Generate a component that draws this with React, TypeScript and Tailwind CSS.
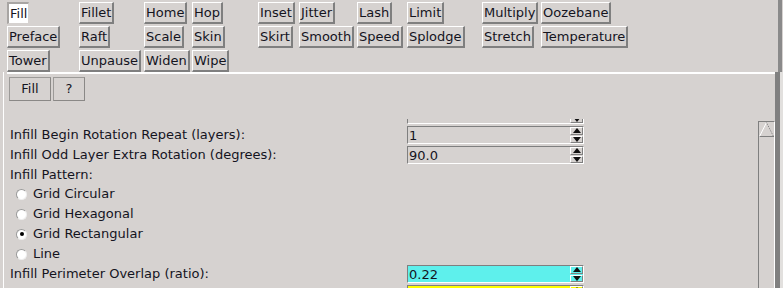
import React from 'react';

const rows: string[][] = [
  ['Fill', 'Fillet', 'Home', 'Hop', 'Inset', 'Jitter', 'Lash', 'Limit', 'Multiply', 'Oozebane'],
  ['Preface', 'Raft', 'Scale', 'Skin', 'Skirt', 'Smooth', 'Speed', 'Splodge', 'Stretch', 'Temperature'],
  ['Tower', 'Unpause', 'Widen', 'Wipe', '', '', '', '', '', ''],
];

const ToolButton = ({ label }: { label: string }) => {
  if (!label) return <div />;
  const selected = label === 'Fill';
  return (
    <div
      className={`justify-self-start h-[22px] px-[1px] flex items-center leading-none ${
        selected
          ? 'bg-white border-t-2 border-l-2 border-[#a8a5a3] border-b border-r border-b-[#d6d2d0] border-r-[#d6d2d0]'
          : 'bg-[#d6d2d0] border-t border-l border-white border-b-2 border-r-2 border-b-[#7f7f7f] border-r-[#7f7f7f]'
      }`}
    >
      {label}
    </div>
  );
};

const Arrows = () => (
  <div className="w-[13px] flex flex-col gap-[1px] self-stretch">
    <div className="flex-1 flex items-center justify-center border-t border-l border-white border-b border-r border-b-[#7f7f7f] border-r-[#7f7f7f]">
      <svg width="8" height="5" viewBox="0 0 8 5"><path d="M4 0 L8 5 L0 5 Z" fill="#111" /></svg>
    </div>
    <div className="flex-1 flex items-center justify-center border-t border-l border-white border-b border-r border-b-[#7f7f7f] border-r-[#7f7f7f]">
      <svg width="8" height="5" viewBox="0 0 8 5"><path d="M0 0 L8 0 L4 5 Z" fill="#111" /></svg>
    </div>
  </div>
);

const Spin = ({ value, bg }: { value: string; bg: string }) => (
  <div className={`w-[177px] h-[18px] flex items-stretch border-t border-l border-[#7f7f7f] border-b border-r border-b-white border-r-white ${bg}`}>
    <div className="flex-1 pl-[1px] flex items-center leading-none">{value}</div>
    <Arrows />
  </div>
);

const Radio = ({ label, checked }: { label: string; checked?: boolean }) => (
  <div className="h-[20px] flex items-center pl-[9px]">
    <div className="w-[11px] h-[11px] rounded-full bg-white border border-t-[#9a9a9a] border-l-[#9a9a9a] border-b-[#eeeeee] border-r-[#eeeeee] flex items-center justify-center">
      {checked && <div className="w-[4px] h-[4px] rounded-full bg-black" />}
    </div>
    <span className="ml-[6px]">{label}</span>
  </div>
);

const Row = ({ label, short, children }: { label: string; short?: boolean; children?: React.ReactNode }) => (
  <div className={`${short ? 'h-[19px]' : 'h-[20px]'} flex items-center`}>
    <span className="pl-[3px] w-[400px]">{label}</span>
    {children}
  </div>
);

export default function App() {
  return (
    <div
      className="w-[783px] h-[288px] overflow-hidden bg-[#d6d2d0] text-[13px] text-[#14141e] flex flex-col"
      style={{ fontFamily: '"DejaVu Sans", sans-serif' }}
    >
      {/* Top button bar */}
      <div className="h-[73px] flex">
        <div className="flex-1 pt-[2px] pl-[7px] grid grid-cols-[72px_65px_48px_66px_41px_58px_50px_75px_59px_auto] gap-y-[2px] content-start">
          {rows.map((r, i) => r.map((l, j) => <ToolButton key={`${i}-${j}`} label={l} />))}
        </div>
        <div className="w-[4px] bg-[#8a8a8a]" />
        <div className="w-[1px]" />
      </div>

      {/* Main frame */}
      <div className="flex-1 flex">
        <div className="w-[3px]" />
        <div className="w-[1px] bg-white" />
        <div className="w-[3px]" />
        <div className="flex-1 flex flex-col border-t-2 border-white">
          <div className="flex gap-[2px] pl-[2px] pt-[3px]">
            <div className="w-[42px] h-[24px] flex items-center justify-center border border-[#9c9a98] border-b-[#8a8886] border-r-[#8a8886]">Fill</div>
            <div className="w-[32px] h-[24px] flex items-center justify-center border border-[#9c9a98] border-b-[#8a8886] border-r-[#8a8886]">?</div>
          </div>

          <div className="flex-1 flex mt-[18px]">
            <div className="flex-1 overflow-hidden pt-[4px]">
              <div className="-mt-[18px]">
                <Row label="">
                  <Spin value="" bg="bg-[#d6d2d0]" />
                </Row>
              </div>
              <Row label="Infill Begin Rotation Repeat (layers):">
                <Spin value="1" bg="bg-[#d6d2d0]" />
              </Row>
              <Row label="Infill Odd Layer Extra Rotation (degrees):">
                <Spin value="90.0" bg="bg-[#d6d2d0]" />
              </Row>
              <Row label="Infill Pattern:" short />
              <Radio label="Grid Circular" />
              <Radio label="Grid Hexagonal" />
              <Radio label="Grid Rectangular" checked />
              <Radio label="Line" />
              <Row label="Infill Perimeter Overlap (ratio):">
                <Spin value="0.22" bg="bg-[#5ef0ec]" />
              </Row>
              <Row label="Infill Solidity (ratio):">
                <Spin value="" bg="bg-[#ffff00]" />
              </Row>
            </div>

            {/* Scrollbar */}
            <div className="w-[17px] mt-[2px] border-l border-t border-[#7f7f7f] border-r border-r-white flex flex-col">
              <div className="h-[15px] border-b border-[#7f7f7f]">
                <svg width="15" height="15" viewBox="0 0 15 15">
                  <path d="M0.5 14.5 L7.5 0.5" stroke="#ffffff" strokeWidth="1" />
                  <path d="M7.5 0.5 L14.5 14.5" stroke="#7f7f7f" strokeWidth="1" strokeDasharray="1 1" />
                </svg>
              </div>
            </div>
          </div>
        </div>
        <div className="w-[5px] bg-[#808080]" />
        <div className="w-[3px] bg-[#e2e0de]" />
      </div>
    </div>
  );
}
